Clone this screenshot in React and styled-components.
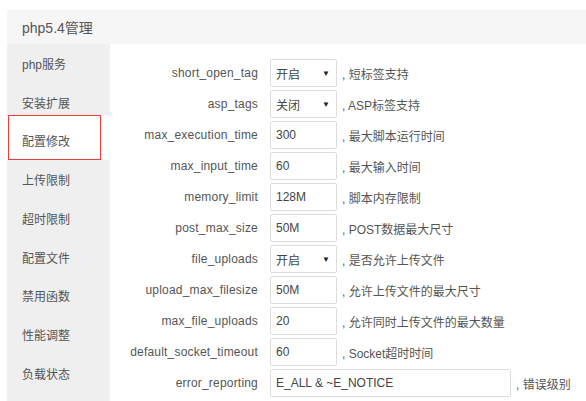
import React from "react";
import styled, { createGlobalStyle } from "styled-components";

const Global = createGlobalStyle`
  html, body { margin: 0; padding: 0; background: #fff; overflow: hidden; }
  body { font-family: "Liberation Sans", "Noto Sans CJK SC", sans-serif; color: #555; }
`;

const Page = styled.div`
  padding: 10px 0 0 7px;
  height: 401px;
  box-sizing: border-box;
  display: flex;
  flex-direction: column;
`;

const TitleBar = styled.div`
  height: 34px;
  background: #f6f6f7;
  display: flex;
  align-items: center;
  padding-left: 15px;
  font-size: 14px;
  color: #555;
`;

const Body = styled.div`
  flex: 1;
  display: flex;
  min-height: 0;
`;

const Sidebar = styled.div`
  width: 103px;
  background: #efeff0;
  display: flex;
  flex-direction: column;
`;

const NavItem = styled.div`
  position: relative;
  flex: none;
  height: ${(p) => (p.$active ? 45.75 : 38.75)}px;
  margin-top: ${(p) => (p.$active ? -7 : 0)}px;
  padding-top: ${(p) => (p.$active ? 7 : 0)}px;
  box-sizing: border-box;
  display: flex;
  align-items: center;
  padding-left: 15px;
  font-size: 12px;
  color: #555;
  background: ${(p) => (p.$active ? "#fff" : "transparent")};
  &::after {
    content: "";
    display: ${(p) => (p.$active ? "block" : "none")};
    position: absolute;
    left: 1px;
    right: 9px;
    top: 0;
    bottom: 0;
    border: 1px solid #ee3b3b;
  }
`;

const Content = styled.div`
  flex: 1;
  padding: 15px 0 0 10px;
  display: grid;
  grid-template-columns: 138px auto;
  column-gap: 12px;
  row-gap: 3px;
  align-content: start;
  grid-auto-rows: 28px;
`;

const Label = styled.div`
  font-size: 12px;
  letter-spacing: 0.2px;
  color: #555;
  text-align: right;
  display: flex;
  align-items: center;
  justify-content: flex-end;
  white-space: nowrap;
`;

const Field = styled.div`
  display: flex;
  align-items: center;
  gap: 5px;
  font-size: 12px;
  color: #555;
  white-space: nowrap;
`;

const Box = styled.div`
  width: ${(p) => p.$w}px;
  height: 28px;
  box-sizing: border-box;
  border: 1px solid #ddd;
  border-radius: 2px;
  display: flex;
  align-items: center;
  justify-content: space-between;
  padding: 0 6px 0 5px;
  font-size: 12px;
  color: #444;
  background: #fff;
`;

const Arrow = styled.span`
  font-size: 8px;
  color: #222;
`;

const nav = ["php服务", "安装扩展", "配置修改", "上传限制", "超时限制", "配置文件", "禁用函数", "性能调整", "负载状态"];

const rows = [
  { k: "short_open_tag", v: "开启", sel: true, d: ", 短标签支持" },
  { k: "asp_tags", v: "关闭", sel: true, d: ", ASP标签支持" },
  { k: "max_execution_time", v: "300", d: ", 最大脚本运行时间" },
  { k: "max_input_time", v: "60", d: ", 最大输入时间" },
  { k: "memory_limit", v: "128M", d: ", 脚本内存限制" },
  { k: "post_max_size", v: "50M", d: ", POST数据最大尺寸" },
  { k: "file_uploads", v: "开启", sel: true, d: ", 是否允许上传文件" },
  { k: "upload_max_filesize", v: "50M", d: ", 允许上传文件的最大尺寸" },
  { k: "max_file_uploads", v: "20", d: ", 允许同时上传文件的最大数量" },
  { k: "default_socket_timeout", v: "60", d: ", Socket超时时间" },
  { k: "error_reporting", v: "E_ALL & ~E_NOTICE", w: 241, d: ", 错误级别" },
];

export default function App() {
  return (
    <>
      <Global />
      <Page>
        <TitleBar>php5.4管理</TitleBar>
        <Body>
          <Sidebar>
            {nav.map((n) => (
              <NavItem key={n} $active={n === "配置修改"}>{n}</NavItem>
            ))}
          </Sidebar>
          <Content>
            {rows.map((r) => (
              <React.Fragment key={r.k}>
                <Label>{r.k}</Label>
                <Field>
                  <Box $w={r.w || 67}>
                    <span>{r.v}</span>
                    {r.sel && <Arrow>▼</Arrow>}
                  </Box>
                  <span>{r.d}</span>
                </Field>
              </React.Fragment>
            ))}
          </Content>
        </Body>
      </Page>
    </>
  );
}
